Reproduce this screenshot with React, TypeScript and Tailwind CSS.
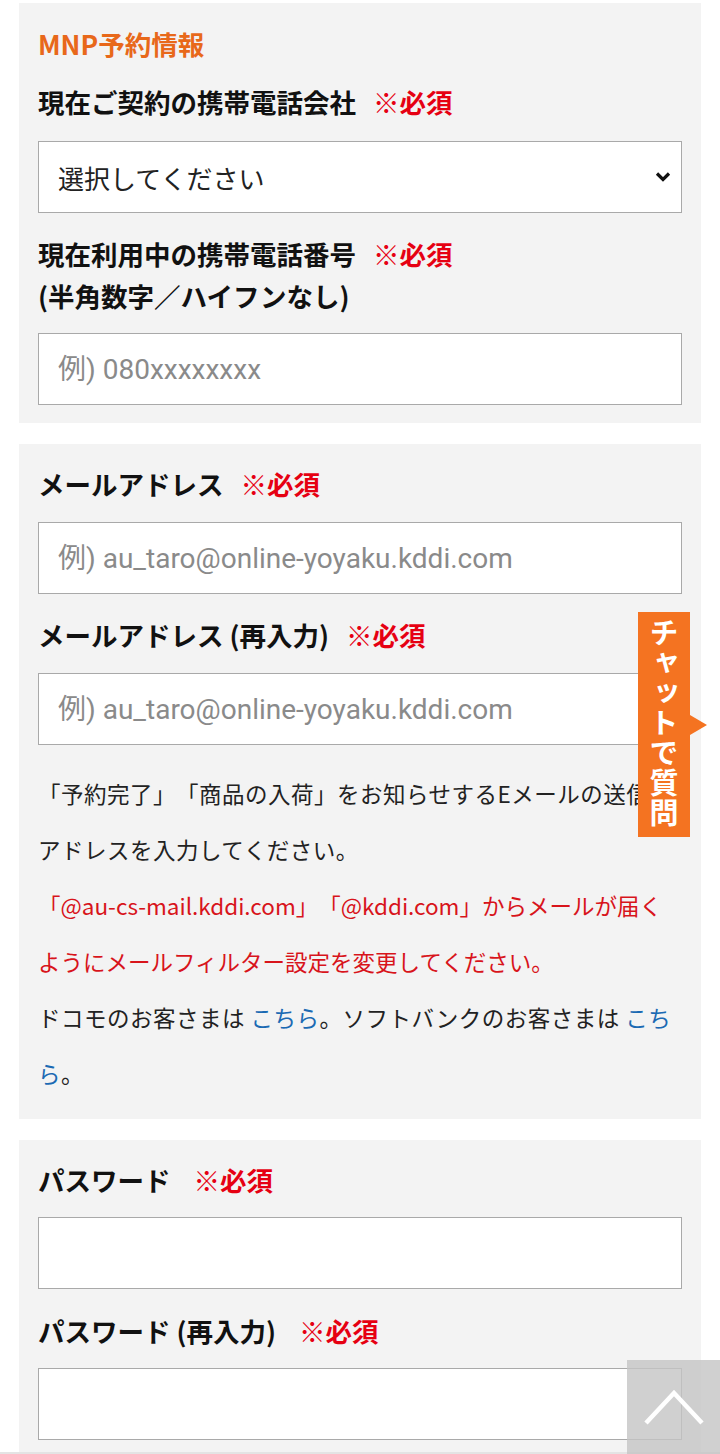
import React from 'react';

const jp = '[font-family:"Noto_Sans_CJK_JP",sans-serif]';

const Required: React.FC<{ gap?: string }> = ({ gap = 'ml-[17px]' }) => (
  <span className={`${gap} text-[#e60012]`}>※必須</span>
);

const TextBox: React.FC<{ placeholder?: string; type?: string; className?: string }> = ({
  placeholder,
  type = 'text',
  className = '',
}) => (
  <input
    type={type}
    placeholder={placeholder}
    className={`block w-full h-[72px] bg-white border border-[#a9a9a9] px-[19px] text-[28px] text-[#222] placeholder:text-[#8a8a8a] outline-none [font-family:Roboto,"Noto_Sans_CJK_JP",sans-serif] ${className}`}
  />
);

const App: React.FC = () => {
  return (
    <div className={`relative w-[720px] h-[1454px] overflow-hidden bg-white pt-[3px] [text-spacing-trim:space-all] ${jp}`}>
      {/* MNP */}
      <section className="mx-[19px] bg-[#f3f3f3] px-[19px] pt-[21px] pb-[18px]">
        <h2 className="text-[26.5px] leading-[40px] font-bold text-[#e8681a]">MNP予約情報</h2>
        <p className="mt-[18px] text-[26.5px] leading-[40px] font-bold text-[#111]">
          現在ご契約の携帯電話会社
          <Required />
        </p>
        <div className="mt-[19px] relative h-[72px] bg-white border border-[#a9a9a9] flex items-center pl-[19px]">
          <span className="text-[26px] text-[#222]">選択してください</span>
          <svg className="absolute right-[10px] top-1/2 -translate-y-1/2" width="16" height="11" viewBox="0 0 16 11">
            <polyline points="2,2 8,8 14,2" fill="none" stroke="#111" strokeWidth="3.2" />
          </svg>
        </div>
        <p className="mt-[20px] text-[26.5px] leading-[42px] font-bold text-[#111]">
          現在利用中の携帯電話番号
          <Required />
          <br />
          (半角数字／ハイフンなし)
        </p>
        <TextBox className="mt-[16px]" placeholder="例) 080xxxxxxxx" />
      </section>

      {/* Mail */}
      <section className="mx-[19px] mt-[21px] bg-[#f3f3f3] px-[19px] pt-[20px] pb-[18px]">
        <p className="text-[26.5px] leading-[40px] font-bold text-[#111]">
          メールアドレス
          <Required />
        </p>
        <TextBox className="mt-[18px]" placeholder="例) au_taro@online-yoyaku.kddi.com" />
        <p className="mt-[21px] text-[26.5px] leading-[40px] font-bold text-[#111]">
          メールアドレス (再入力)
          <Required />
        </p>
        <TextBox className="mt-[18px]" placeholder="例) au_taro@online-yoyaku.kddi.com" />
        <div className="mt-[20px] text-[22.5px] leading-[56px] tracking-[0.5px] text-[#222]">
          <p>
            「予約完了」「商品の入荷」をお知らせするEメールの送信先
            <br />
            アドレスを入力してください。
          </p>
          <p className="text-[#d8141b] tracking-normal">
            「@au-cs-mail.kddi.com」「@kddi.com」からメールが届く
            <br />
            ようにメールフィルター設定を変更してください。
          </p>
          <p>
            ドコモのお客さまは <a className="text-[#1b6ab3]">こちら</a>。ソフトバンクのお客さまは{' '}
            <a className="text-[#1b6ab3]">こちら</a>。
          </p>
        </div>
      </section>

      {/* Password */}
      <section className="mx-[19px] mt-[21px] bg-[#f3f3f3] px-[19px] pt-[20px] h-[400px]">
        <p className="text-[26.5px] leading-[40px] font-bold text-[#111]">
          パスワード
          <Required gap="ml-[23px]" />
        </p>
        <TextBox type="password" className="mt-[17px]" />
        <p className="mt-[22px] text-[26.5px] leading-[40px] font-bold text-[#111]">
          パスワード (再入力)
          <Required gap="ml-[23px]" />
        </p>
        <TextBox type="password" className="mt-[17px]" />
      </section>

      <div className="absolute left-0 bottom-0 w-full h-[2px] bg-[#e4e4e4]" />

      {/* chat tab */}
      <div className="absolute left-[638px] top-[612px] flex items-center">
        <div className="w-[52px] h-[225px] bg-[#f47321] flex justify-center pt-[6px]">
          <span className="[writing-mode:vertical-rl] text-white font-bold text-[29px] leading-[52px] tracking-[1px]">
            チャットで質問
          </span>
        </div>
        <div className="w-0 h-0 border-y-[10px] border-y-transparent border-l-[17px] border-l-[#f47321]" />
      </div>

      {/* back to top */}
      <div className="absolute right-0 bottom-0 w-[93px] h-[94px] bg-[#c4c4c4]/80 flex items-center justify-center">
        <svg width="64" height="40" viewBox="0 0 64 40">
          <polyline points="4,36 32,6 60,36" fill="none" stroke="#fff" strokeWidth="4.5" />
        </svg>
      </div>
    </div>
  );
};

export default App;
